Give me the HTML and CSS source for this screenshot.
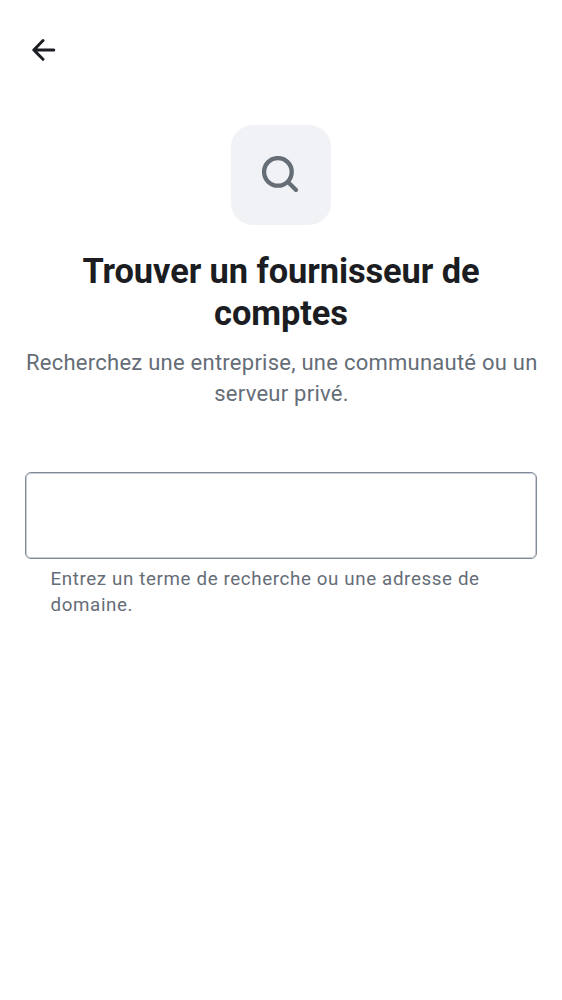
FILE: index.html
```html
<!DOCTYPE html>
<html lang="fr">
<head>
<meta charset="utf-8">
<title>Trouver un fournisseur de comptes</title>
<link rel="stylesheet" href="styles.css">
</head>
<body>
<header class="topbar">
<button class="back" aria-label="Retour"><svg viewBox="0 0 24 24" width="24" height="24"><path d="M21.8 12H2M11 2.5L1.8 12l9.2 9.3"/></svg></button>
</header>
<main class="content">
<div class="tile"><svg viewBox="0 0 38 38" width="38" height="38"><circle cx="15.9" cy="15.9" r="13.8"/><path d="M26 26l8 8"/></svg></div>
<h1 class="title">Trouver un fournisseur de<br>comptes</h1>
<p class="subtitle">Recherchez une entreprise, une communauté ou un<br>serveur privé.</p>
<input class="field" type="text" aria-label="Recherche">
<p class="hint">Entrez un terme de recherche ou une adresse de<br>domaine.</p>
</main>
</body>
</html>
```
FILE: styles.css
```css
* { box-sizing: border-box; }
body { margin: 0; background: #fff; font-family: Roboto, sans-serif; color: #1b1d22; }
.topbar { height: 100px; padding: 38px 0 0 32px; }
.back { display: block; padding: 0; border: 0; background: none; color: #1b1d22; }
.back svg { display: block; fill: none; stroke: currentColor; stroke-width: 3; stroke-linecap: round; stroke-linejoin: round; }
.content { display: flex; flex-direction: column; padding: 25px 25px 0; }
.tile { display: grid; place-items: center; align-self: center; width: 100px; height: 100px; border-radius: 22px; background: #f0f2f5; }
.tile svg { fill: none; stroke: #656d77; stroke-width: 4.3; stroke-linecap: round; }
.title { margin: 25px 0 0; font-size: 34.4px; line-height: 42px; letter-spacing: -.08px; font-weight: 700; text-align: center; white-space: nowrap; }
.subtitle { margin: 13px 0 0 1px; font-size: 22px; line-height: 31.2px; letter-spacing: .25px; text-align: center; white-space: nowrap; color: #656d77; }
.field { width: 100%; height: 87px; margin: 63px 0 0; padding: 0 25px; border: 1px solid #818a98; border-radius: 6px; background: #fff; box-shadow: inset 0 0 0 1px #c9ced6; font: inherit; font-size: 25px; }
.hint { margin: 7px 0 0 25.5px; font-size: 18.75px; line-height: 26px; letter-spacing: .62px; white-space: nowrap; color: #656d77; }
```
